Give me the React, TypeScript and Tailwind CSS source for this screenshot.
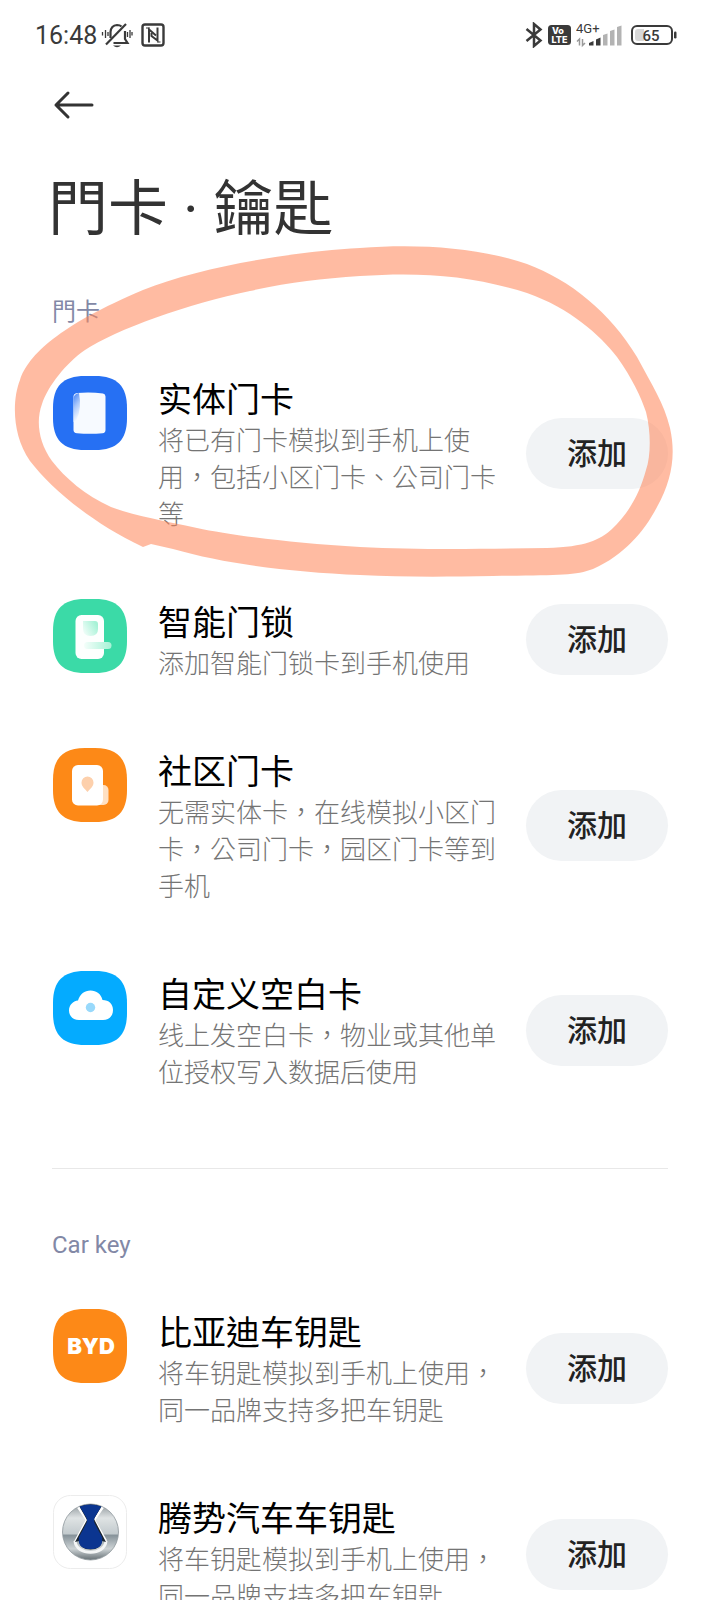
import type { ReactNode } from 'react';

// ── Card data ────────────────────────────────────────────────────────────────

interface KeyItem {
  title: string;
  description: string;
  icon: ReactNode;
}

const DOOR_CARDS: KeyItem[] = [
  {
    title: '实体门卡',
    description: '将已有门卡模拟到手机上使用，包括小区门卡、公司门卡等',
    icon: <PhysicalCardIcon />,
  },
  {
    title: '智能门锁',
    description: '添加智能门锁卡到手机使用',
    icon: <SmartLockIcon />,
  },
  {
    title: '社区门卡',
    description: '无需实体卡，在线模拟小区门卡，公司门卡，园区门卡等到手机',
    icon: <CommunityCardIcon />,
  },
  {
    title: '自定义空白卡',
    description: '线上发空白卡，物业或其他单位授权写入数据后使用',
    icon: <BlankCardIcon />,
  },
];

const CAR_KEYS: KeyItem[] = [
  {
    title: '比亚迪车钥匙',
    description: '将车钥匙模拟到手机上使用，同一品牌支持多把车钥匙',
    icon: <BydIcon />,
  },
  {
    title: '腾势汽车车钥匙',
    description: '将车钥匙模拟到手机上使用，同一品牌支持多把车钥匙',
    icon: <DenzaIcon />,
  },
];

// ── Item icons ───────────────────────────────────────────────────────────────

const SQUIRCLE =
  'M0 32C0 10 10 0 32 0H42C64 0 74 10 74 32V42C74 64 64 74 42 74H32C10 74 0 64 0 42Z';

function Tile({ fill, children }: { fill: string; children: ReactNode }) {
  return (
    <svg viewBox="0 0 74 74" className="size-[74px] shrink-0" aria-hidden="true">
      <path d={SQUIRCLE} fill={fill} />
      {children}
    </svg>
  );
}

function PhysicalCardIcon() {
  return (
    <Tile fill="#2670f3">
      <defs>
        <linearGradient id="card-fold" x1="0" y1="0" x2="0.3" y2="1">
          <stop offset="0" stopColor="#3f80f5" />
          <stop offset="0.5" stopColor="#a9c7fb" />
          <stop offset="1" stopColor="#f7faff" />
        </linearGradient>
      </defs>
      <path d="M24 17Q37 15.600 50 17.500Q52.500 18 52.500 20.500V54Q52.500 57 49.500 57.200Q37 58.500 24 57.200Q20.500 57 20.500 54V20.500Q20.500 17.500 24 17Z" fill="#f7faff" />
      <path d="M20.500 23Q20.500 18 26 17Q29 32 23.500 44L20.500 46Z" fill="url(#card-fold)" />
    </Tile>
  );
}

function SmartLockIcon() {
  return (
    <Tile fill="#3bdaa7">
      <defs>
        <linearGradient id="lock-screen" x1="0.9" y1="0.2" x2="0" y2="0.7">
          <stop offset="0" stopColor="#a6f2d6" />
          <stop offset="1" stopColor="#effdf8" />
        </linearGradient>
        <linearGradient id="lock-handle" x1="0" y1="0" x2="1" y2="0">
          <stop offset="0" stopColor="#f4fefa" />
          <stop offset="1" stopColor="#a6f2d6" />
        </linearGradient>
      </defs>
      <rect x="22.500" y="16" width="28.500" height="44" rx="6" fill="#fdfffe" />
      <path d="M30 22H42Q45 22 45 25V30Q45 37 37.500 37T30 30Z" fill="url(#lock-screen)" />
      <rect x="31" y="43" width="27.500" height="7" rx="3.500" fill="url(#lock-handle)" />
    </Tile>
  );
}

function CommunityCardIcon() {
  return (
    <Tile fill="#fd8917">
      <rect x="40" y="37" width="15.500" height="20" rx="5" fill="#ffe0c2" />
      <rect x="19" y="17" width="31" height="40.500" rx="6" fill="#fff" />
      <path d="M34.500 44C31.500 40.500 28.500 38.500 28.500 34.500A6 6 0 0 1 40.500 34.500C40.500 38.500 37.500 40.500 34.500 44Z" fill="#fdd0ac" />
    </Tile>
  );
}

function BlankCardIcon() {
  return (
    <Tile fill="#04abff">
      <path d="M26 49C20 49 16 45 16 39.500S20 30 25 29.500C27 23 31.500 19.500 37.500 19.500S48 23 49.500 29C56 29 60 33 60 39S56 49 50 49Z" fill="#fff" />
      <circle cx="37.500" cy="36.500" r="4.700" fill="#98d9fb" />
    </Tile>
  );
}

function BydIcon() {
  return (
    <Tile fill="#fd8917">
      <text x="38" y="45" textAnchor="middle" fill="#fff" className="font-[Inter] text-[22px] font-black">
        BYD
      </text>
    </Tile>
  );
}

function DenzaIcon() {
  return (
    <svg viewBox="0 0 74 74" className="size-[74px] shrink-0" aria-hidden="true">
      <defs>
        <linearGradient id="chrome" x1="0" y1="0" x2="0" y2="1">
          <stop offset="0" stopColor="#8d959a" />
          <stop offset="0.25" stopColor="#dfe3e4" />
          <stop offset="0.53" stopColor="#c3cbce" />
          <stop offset="0.56" stopColor="#87939a" />
          <stop offset="0.8" stopColor="#cdd3d5" />
          <stop offset="1" stopColor="#667075" />
        </linearGradient>
        <clipPath id="badge">
          <circle cx="37.500" cy="37" r="27.500" />
        </clipPath>
      </defs>
      <rect x="0.500" y="0.500" width="73" height="73" rx="17" fill="#fff" stroke="#ececec" />
      <circle cx="37.500" cy="37" r="28" fill="url(#chrome)" stroke="#8d969b" strokeWidth="0.800" />
      <path d="M22 46C23 61 52 61 53 46" fill="none" stroke="#f4f6f6" strokeWidth="3" />
      <g clipPath="url(#badge)">
        <path d="M23 9L34 25L22 47M52 9L41 25L53 46" fill="none" stroke="#fff" strokeWidth="2.500" />
        <path d="M24 7H51L41 24L53 47L49 46Q48 54.500 37.500 54.500T26 46L22 47L34 25Z" fill="#1d2730" />
        <path d="M24 7H51L42 22Q40 25.500 42 29L49 42Q51 54 37.500 54T26 42L33 29Q35 25.500 33 22Z" fill="#0b3590" />
      </g>
    </svg>
  );
}

// ── Status bar ───────────────────────────────────────────────────────────────

function StatusBar() {
  return (
    <div className="flex h-[70px] items-center justify-between pr-[43px] pl-[35px] text-[#3a3a3a]">
      <div className="flex items-center">
        <span className="pt-0.5 text-[25px] leading-8">16:48</span>
        <svg viewBox="0 0 32 28" className="ml-1 h-7 w-8" fill="none" stroke="currentColor" strokeWidth="2.200" aria-hidden="true">
          <path d="M9.500 17V11Q10 4.500 16 4Q19 4 20.500 5.500M24 10V18L26.500 22H12.500" />
          <path d="M25 3L5 23.500" strokeWidth="2.200" />
          <path d="M12 24.500H20Q16 28 12 24.500Z" fill="currentColor" stroke="none" />
          <path d="M1.500 11V14.500M4.500 9V17M7 11V15M26.500 11V16M29 9V17M31 11V14.500" strokeWidth="1.300" />
        </svg>
        <svg viewBox="0 0 24 24" className="ml-2 size-6" fill="none" stroke="currentColor" aria-hidden="true">
          <rect x="1.500" y="1.500" width="21" height="21" rx="2.500" strokeWidth="2.400" />
          <path d="M8 19.500V6.500L15 12.500" strokeWidth="2" />
          <path d="M16.500 4.500V17.500L10.500 13V10" strokeWidth="2" />
          <path d="M5 5H9M16 19H19.500" strokeWidth="1.200" />
        </svg>
      </div>

      <div className="flex items-center">
        <svg viewBox="0 0 18 26" className="h-[26px] w-[18px]" fill="none" stroke="currentColor" strokeWidth="2.500" aria-hidden="true">
          <path d="M1.500 7L15.500 18.500L9 24V2L15.500 7.500L1.500 19" />
        </svg>
        <svg viewBox="0 0 23 20" className="ml-[5px] h-5 w-[23px]" aria-hidden="true">
          <rect width="23" height="20" rx="3.500" fill="currentColor" />
          <text x="10" y="9" textAnchor="middle" fill="#fff" className="font-[Inter] text-[9px] font-extrabold">Vo</text>
          <text x="11.500" y="17.500" textAnchor="middle" fill="#fff" className="font-[Inter] text-[9px] font-extrabold">LTE</text>
        </svg>
        <svg viewBox="0 0 46 26" className="ml-[5px] h-[26px] w-[46px]" aria-hidden="true">
          <text x="0" y="11" fill="currentColor" className="text-[13px]">4G+</text>
          <path d="M3.500 23.500V17L1 19.500M6.500 17V23.500L9 21" fill="none" stroke="#999" strokeWidth="1.500" />
          <path d="M13 23.500V21L17.500 19V23.500ZM20 23.500V17.500L24.500 15.500V23.500Z" fill="currentColor" />
          <path d="M27 23.500V13L31.500 11.500V23.500ZM34 23.500V9L38.500 7.500V23.500ZM41 23.500V5L45.500 3.500V23.500Z" fill="#b3b3b3" />
        </svg>
        <svg viewBox="0 0 47 20" className="ml-2 h-5 w-[47px]" aria-hidden="true">
          <rect x="2" y="1" width="40" height="18" rx="5" fill="#fff" stroke="currentColor" strokeWidth="2" />
          <path d="M6 4H14V16H8Q5 16 5 13V7Q5 4 8 4Z" fill="#d8d8d8" />
          <rect x="44" y="6.500" width="2.500" height="7" rx="1.200" fill="currentColor" />
          <text x="21" y="15.500" textAnchor="middle" fill="currentColor" className="text-[15px] font-medium">65</text>
        </svg>
      </div>
    </div>
  );
}

// ── Hand-drawn highlight ─────────────────────────────────────────────────────

const STROKE_OUTER =
  'M360 248C420 243 480 248 527 264C570 280 610 312 637 357C652 385 664 403 670 428C676 455 672 480 657 507' +
  'C645 530 625 555 593 569C575 576 555 575 493 576C440 577 400 577 360 575C290 572 225 564 173 549L151 544L143 547' +
  'C90 522 50 487 30 461C12 435 12 400 20 380C28 355 60 325 143 290C200 267 290 252 360 248Z';

const STROKE_INNER =
  'M360 276C420 272 470 275 527 293C570 308 600 335 617 357C632 378 641 397 646 412C651 432 651 455 646 470' +
  'C640 492 630 512 612 529C600 540 585 547 547 548C480 549 420 550 360 547C290 543 230 535 197 528' +
  'C165 521 135 516 111 507C85 495 65 478 52 461C38 442 36 420 42 404C48 386 66 363 85 350' +
  'C115 330 190 303 250 291C290 282 320 279 360 276Z';

function Highlight() {
  return (
    <svg
      viewBox="0 0 720 600"
      className="pointer-events-none absolute top-0 left-0 w-full"
      aria-hidden="true"
    >
      <path d={STROKE_OUTER + STROKE_INNER} fill="#ff8356" fillOpacity="0.55" fillRule="evenodd" />
    </svg>
  );
}

// ── List ─────────────────────────────────────────────────────────────────────

function KeyRow({ item }: { item: KeyItem }) {
  return (
    <li className="flex items-center py-[34px] pl-px">
      <div className="flex min-w-0 flex-1 items-start gap-[31px] pr-[27px]">
        {item.icon}
        <div className="-mb-[3px] min-w-0 flex-1 pt-0.5">
          <h3 className="text-[34px] leading-[44px] text-black">{item.title}</h3>
          <p className="mt-px text-[26px] leading-[37px] font-light text-[#747474]">{item.description}</p>
        </div>
      </div>
      <button
        type="button"
        aria-label={`添加 ${item.title}`}
        className="h-[71px] w-[142px] shrink-0 rounded-full bg-[#f1f3f5] text-[30px] font-medium text-[#222]"
      >
        添加
      </button>
    </li>
  );
}

function KeySection({ label, items }: { label: string; items: KeyItem[] }) {
  return (
    <section>
      <h2 className="text-2xl text-[#8288a6]">{label}</h2>
      <ul className="mt-3.5">
        {items.map((item) => (
          <KeyRow key={item.title} item={item} />
        ))}
      </ul>
    </section>
  );
}

// ── App component ────────────────────────────────────────────────────────────

export default function App() {
  return (
    <div className="relative h-screen overflow-x-hidden overflow-y-auto bg-white font-[Roboto,'Noto_Sans_CJK_TC',sans-serif] [scrollbar-width:none]">
      <StatusBar />

      <main className="px-[52px]">
        <button type="button" aria-label="返回" className="flex h-[70px] items-center text-[#333]">
          <svg viewBox="0 0 42 30" className="h-[30px] w-[42px]" fill="none" stroke="currentColor" strokeWidth="3" strokeLinecap="round" strokeLinejoin="round">
            <path d="M40 15H4M16 3L4 15L16 27" />
          </svg>
        </button>

        <h1 className="mt-[30px] -ml-1 text-[60px] leading-[80px] text-[#333]">門卡 · 鑰匙</h1>

        <div className="mt-[46px]">
          <KeySection label="門卡" items={DOOR_CARDS} />
        </div>
        <hr className="mt-[45px] mb-[60px] border-[#e8e8e8]" />
        <KeySection label="Car key" items={CAR_KEYS} />
      </main>

      <Highlight />
    </div>
  );
}
